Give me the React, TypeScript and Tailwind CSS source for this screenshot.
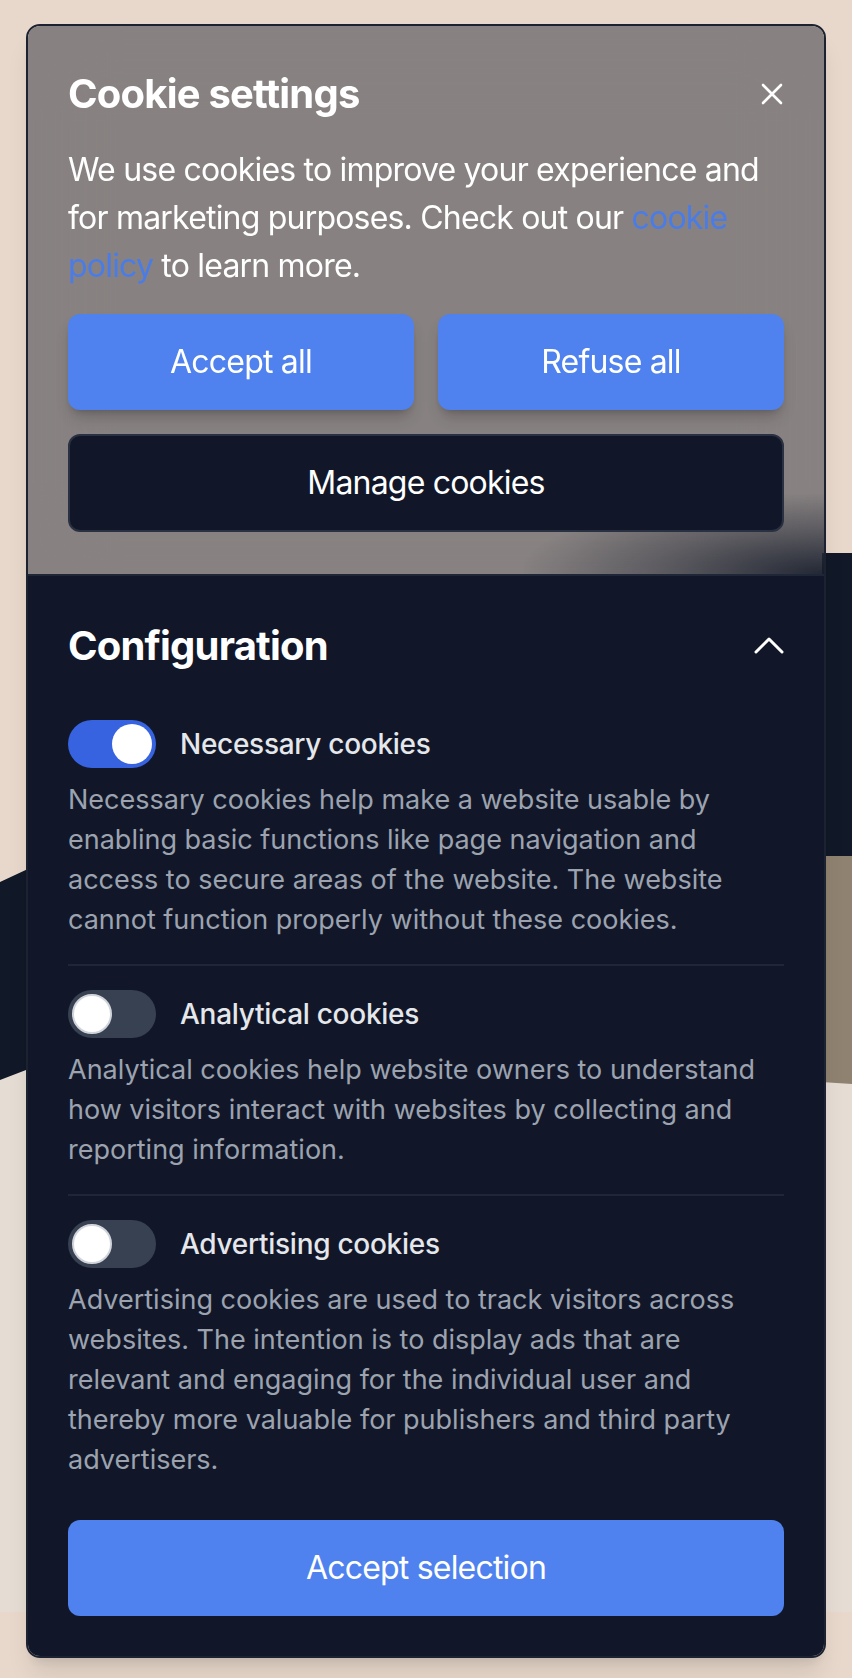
import React from "react";

function Toggle({ on }: { on: boolean }) {
  return (
    <div
      className={
        on
          ? "flex h-[48px] w-[88px] shrink-0 items-center justify-end rounded-full bg-[#3763e0] px-[4px]"
          : "flex h-[48px] w-[88px] shrink-0 items-center justify-start rounded-full bg-[#374151] px-[4px]"
      }
    >
      <div
        className={
          on
            ? "h-[40px] w-[40px] rounded-full bg-white"
            : "h-[40px] w-[40px] rounded-full border-2 border-[#d1d5db] bg-white"
        }
      />
    </div>
  );
}

function Item({ on, title, text }: { on: boolean; title: string; text: string }) {
  return (
    <div className="py-[24px]">
      <div className="flex items-center gap-[24px]">
        <Toggle on={on} />
        <span className="text-[28px] font-medium leading-[48px] tracking-[-0.01em] text-[#e5e7eb]">{title}</span>
      </div>
      <p className="mt-[12px] text-[27px] leading-[40px] text-[#9ca3af]">{text}</p>
    </div>
  );
}

export default function App() {
  return (
    <div
      className="relative h-[1678px] w-full overflow-hidden bg-[#e8d8cb]"
      style={{ fontFamily: "Inter, 'Noto Sans', 'Liberation Sans', sans-serif" }}
    >
      <svg className="absolute left-0 top-0" width="852" height="1678" viewBox="0 0 852 1678">
        <rect x="0" y="0" width="852" height="1678" fill="#e8d8cb" />
        <rect x="0" y="900" width="852" height="712" fill="#e5ddd4" />
        <path
          d="M0 882 L30 868 L30 600 L822 600 L822 553 L852 553 L852 960 C 500 980, 200 1030, 26 1070 L0 1080 Z"
          fill="#111827"
        />
        <path d="M790 856 L852 856 L852 1084 L790 1080 Z" fill="#8f8270" />
      </svg>

      <div className="relative px-[26px] pt-[24px]">
        <div className="overflow-hidden rounded-[14px] border-2 border-[#1c2231] shadow-xl">
          <section className="relative bg-[#111827]/45 px-[40px] pb-[42px] pt-[40px] backdrop-blur-2xl">
            <div className="pointer-events-none absolute bottom-0 right-0 h-[80px] w-[300px] bg-[radial-gradient(ellipse_at_100%_100%,rgba(17,24,39,0.85)_0%,rgba(17,24,39,0.35)_40%,rgba(17,24,39,0)_72%)]" />
            <div className="relative flex items-center justify-between">
              <h2 className="text-[40px] font-bold leading-[56px] tracking-[-0.02em] text-white">Cookie settings</h2>
              <svg width="22" height="22" viewBox="0 0 22 22" className="mr-[1px]">
                <path d="M2 2 L20 20 M20 2 L2 20" stroke="white" strokeWidth="2.6" strokeLinecap="round" />
              </svg>
            </div>
            <p className="relative mt-[24px] text-[32px] leading-[48px] tracking-[-0.025em] text-white">
              We use cookies to improve your experience and for marketing purposes. Check out our{" "}
              <a className="text-[#4a7ce8]">cookie</a> <a className="text-[#4a7ce8]">policy</a> to learn more.
            </p>
            <div className="relative mt-[24px] grid grid-cols-2 gap-[24px]">
              <button className="h-[96px] rounded-[12px] bg-[#4f82ee] text-[32px] tracking-[-0.025em] text-white shadow-lg shadow-black/20">
                Accept all
              </button>
              <button className="h-[96px] rounded-[12px] bg-[#4f82ee] text-[32px] tracking-[-0.025em] text-white shadow-lg shadow-black/20">
                Refuse all
              </button>
            </div>
            <button className="relative mt-[24px] h-[98px] w-full rounded-[12px] border-2 border-[#2a3142] bg-[#111729] text-[32px] tracking-[-0.025em] text-white">
              Manage cookies
            </button>
          </section>

          <section className="border-t-2 border-[#1f2637] bg-[#111729] px-[40px] pb-[40px] pt-[42px]">
            <div className="flex items-center justify-between">
              <h2 className="text-[40px] font-bold leading-[56px] tracking-[-0.02em] text-white">Configuration</h2>
              <svg width="30" height="18" viewBox="0 0 30 18">
                <path d="M2 15 L15 2 L28 15" stroke="white" strokeWidth="3" fill="none" strokeLinecap="round" strokeLinejoin="round" />
              </svg>
            </div>
            <div className="mt-[22px] divide-y-2 divide-[#1f2637]">
              <Item
                on
                title="Necessary cookies"
                text="Necessary cookies help make a website usable by enabling basic functions like page navigation and access to secure areas of the website. The website cannot function properly without these cookies."
              />
              <Item
                on={false}
                title="Analytical cookies"
                text="Analytical cookies help website owners to understand how visitors interact with websites by collecting and reporting information."
              />
              <Item
                on={false}
                title="Advertising cookies"
                text="Advertising cookies are used to track visitors across websites. The intention is to display ads that are relevant and engaging for the individual user and thereby more valuable for publishers and third party advertisers."
              />
            </div>
            <button className="mt-[16px] h-[96px] w-full rounded-[12px] bg-[#4f82ee] text-[32px] tracking-[-0.025em] text-white">
              Accept selection
            </button>
          </section>
        </div>
      </div>
    </div>
  );
}
